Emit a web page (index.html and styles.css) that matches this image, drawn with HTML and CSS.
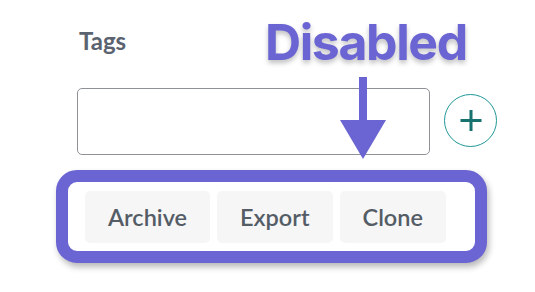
FILE: index.html
```html
<!DOCTYPE html>
<html>
<head lang="en">
    <meta charset="UTF-8">
    <title>Tags</title>
    <link rel="stylesheet" href="styles.css">
</head>
<body>
<div class="page">
    <div class="field">
        <label class="label" for="tags">Tags</label>
        <div class="row">
            <input class="input" id="tags" type="text">
            <button class="add" type="button" aria-label="Add tag">
                <svg width="26" height="26" viewBox="0 0 26 26">
                    <path d="M13 2V23M2.5 12.5H23.5" stroke="#16716f" stroke-width="3" fill="none"/>
                </svg>
            </button>
        </div>
    </div>
    <div class="highlight">
        <button class="action" type="button" disabled>Archive</button>
        <button class="action" type="button" disabled>Export</button>
        <button class="action" type="button" disabled>Clone</button>
    </div>

    <div class="note">Disabled</div>
    <svg class="arrow" width="48" height="84" viewBox="0 0 48 84">
        <rect x="19" y="0" width="8" height="45" fill="#6b64d3"/>
        <polygon points="0,43 46,43 23,82" fill="#6b64d3"/>
    </svg>
</div>
</body>
</html>
```

FILE: styles.css
```css
* {
    margin: 0;
    padding: 0;
    box-sizing: border-box;
}

body {
    background-color: #fff;
    font-family: Lato, "Open Sans", sans-serif;
}

.page {
    position: relative;
    width: 535px;
    height: 292px;
    padding-top: 26px;
}

.field {
    margin-left: 77px;
}

.label {
    display: block;
    font-size: 24px;
    line-height: 30px;
    font-weight: bold;
    color: #5b6370;
    padding-left: 2px;
}

.row {
    display: flex;
    align-items: center;
    gap: 14px;
    margin-top: 32px;
}

.input {
    width: 353px;
    height: 67px;
    border: 1px solid #8e9297;
    border-radius: 5px;
    background-color: #fff;
}

.add {
    display: flex;
    align-items: center;
    justify-content: center;
    width: 53px;
    height: 53px;
    border: 1.5px solid #1f9797;
    border-radius: 50%;
    background-color: #fff;
    margin-top: -2px;
}

.highlight {
    display: flex;
    gap: 7px;
    width: 431px;
    height: 93px;
    margin: 15px 0 0 56px;
    padding: 9px 17px 8px;
    border: 12px solid #6b64d3;
    border-radius: 21px;
    background-color: #fff;
    box-shadow: 2px 4px 6px rgba(0, 0, 0, 0.28);
}

.action {
    height: 52px;
    padding: 0 23px;
    border: none;
    border-radius: 5px;
    background-color: #f6f6f6;
    font-family: Lato, "Open Sans", sans-serif;
    font-size: 23.5px;
    font-weight: 600;
    color: #545c66;
}

.note {
    position: absolute;
    left: 265px;
    top: 12px;
    font-family: Inter, sans-serif;
    font-size: 50px;
    line-height: 60px;
    font-weight: bold;
    letter-spacing: -1.4px;
    color: #6b64d3;
    text-shadow: 0 3px 5px rgba(0, 0, 0, 0.25);
}

.arrow {
    position: absolute;
    left: 340px;
    top: 77px;
}
```
